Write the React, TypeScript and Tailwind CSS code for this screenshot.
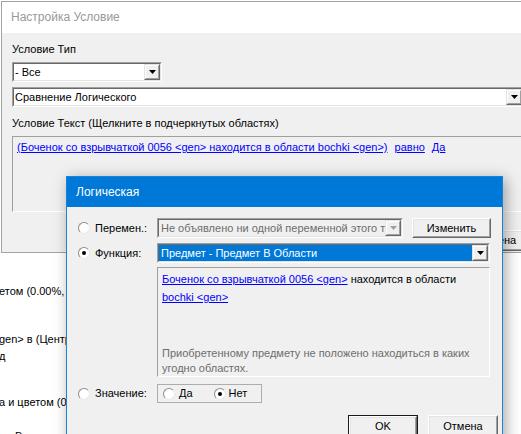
import React from "react";

const FONT = "font-['Liberation_Sans',Arial,sans-serif]";

function Arrow({ gray = false }: { gray?: boolean }) {
  return (
    <svg width="7" height="4" viewBox="0 0 7 4">
      <polygon points="0,0 7,0 3.5,4" fill={gray ? "#a0a0a0" : "#000"} />
    </svg>
  );
}

function DropBtn({ gray = false }: { gray?: boolean }) {
  return (
    <div className="w-[16px] h-full border border-t-[#e3e3e3] border-l-[#e3e3e3] border-r-[#696969] border-b-[#696969]">
      <div className="w-full h-full flex items-center justify-center bg-[#f0f0f0] border border-t-white border-l-white border-r-[#a0a0a0] border-b-[#a0a0a0]">
        <Arrow gray={gray} />
      </div>
    </div>
  );
}

function Combo({
  className,
  children,
  disabled = false,
}: {
  className: string;
  children: React.ReactNode;
  disabled?: boolean;
}) {
  return (
    <div
      className={
        "h-[20px] shrink-0 border border-t-[#a0a0a0] border-l-[#a0a0a0] border-r-white border-b-white " +
        className
      }
    >
      <div
        className={
          "flex h-full border border-t-[#696969] border-l-[#696969] border-r-[#e3e3e3] border-b-[#e3e3e3] " +
          (disabled ? "bg-[#f0f0f0]" : "bg-white")
        }
      >
        <div className="flex-1 min-w-0 overflow-hidden whitespace-nowrap flex items-center">
          {children}
        </div>
        <DropBtn gray={disabled} />
      </div>
    </div>
  );
}

function Btn({
  className,
  children,
  def = false,
}: {
  className: string;
  children: React.ReactNode;
  def?: boolean;
}) {
  return (
    <div
      className={
        "shrink-0 " +
        (def ? "border border-[#1a1a1a] " : "") +
        className
      }
    >
      <div className="w-full h-full border border-t-white border-l-white border-r-[#696969] border-b-[#696969]">
        <div className="w-full h-full flex items-center justify-center bg-[#f0f0f0] border border-t-[#e3e3e3] border-l-[#e3e3e3] border-r-[#a0a0a0] border-b-[#a0a0a0] text-[11px] text-black">
          {children}
        </div>
      </div>
    </div>
  );
}

function Radio({ checked = false }: { checked?: boolean }) {
  return (
    <div className="w-[12px] h-[12px] shrink-0 rounded-full border border-t-[#8c8c8c] border-l-[#8c8c8c] border-r-[#e8e8e8] border-b-[#e8e8e8] bg-white flex items-center justify-center">
      {checked && <div className="w-[4px] h-[4px] rounded-full bg-black" />}
    </div>
  );
}

export default function App() {
  return (
    <div
      className={
        "relative w-[521px] h-[434px] overflow-hidden bg-white text-[11px] leading-[13px] text-black " +
        FONT
      }
    >
      {/* background window text */}
      <div className="absolute left-[-1px] top-[285px] flex flex-col whitespace-nowrap">
        <div>етом (0.00%, 0.00%)</div>
        <div className="mt-[35px]">gen&gt; в (Центр области)</div>
        <div className="mt-[4px]">д</div>
        <div className="mt-[33px]">а и цветом (0.00%)</div>
        <div className="mt-[21px] pl-[16px]">В</div>
      </div>

      {/* Настройка Условие dialog */}
      <div className="absolute left-[1px] top-[1px] w-[560px] h-[252px] border border-[#a3a3a3] bg-[#f0f0f0] flex flex-col">
        <div className="h-[31px] shrink-0 bg-white flex items-center pl-[9px] text-[12px] text-[#999999]">
          Настройка Условие
        </div>
        <div className="flex flex-col pl-[10px]">
          <div className="mt-[10px]">Условие Тип</div>
          <Combo className="mt-[6px] w-[150px]">
            <span className="pl-[1px]">- Все</span>
          </Combo>
          <Combo className="mt-[5px] w-[512px]">
            <span className="pl-[1px]">Сравнение Логического</span>
          </Combo>
          <div className="mt-[10px]">
            Условие Текст (Щелкните в подчеркнутых областях)
          </div>
          <div className="mt-[6px] h-[76px] w-[560px] border border-t-[#a0a0a0] border-l-[#a0a0a0] border-r-white border-b-white pl-[4px] pt-[4px] whitespace-nowrap">
            <span className="text-[#0000ff] underline">
              (Боченок со взрывчаткой 0056 &lt;gen&gt; находится в области
              bochki &lt;gen&gt;)
            </span>
            <span className="ml-[7px] text-[#0000ff] underline">равно</span>
            <span className="ml-[7px] text-[#0000ff] underline">Да</span>
          </div>
          <div className="flex mt-[18px]">
            <Btn className="ml-[447px] w-[75px] h-[21px]">Отмена</Btn>
          </div>
        </div>
      </div>

      {/* Логическая dialog */}
      <div className="absolute left-[66px] top-[176px] w-[437px] h-[280px] border border-[#1883d7] bg-[#f0f0f0] shadow-[3px_3px_14px_rgba(0,0,0,0.35)] flex flex-col">
        <div className="h-[30px] shrink-0 bg-[#0078d7] flex items-center pl-[9px] text-[12px] text-white">
          Логическая
        </div>
        <div className="flex flex-col pl-[11px]">
          {/* row 1 */}
          <div className="mt-[11px] h-[20px] flex items-center">
            <div className="w-[79px] flex items-center gap-[5px] shrink-0">
              <Radio />
              <span>Перемен.:</span>
            </div>
            <Combo className="w-[246px]" disabled>
              <span className="pl-[2px] text-[#6d6d6d]">
                Не объявлено ни одной переменной этого типа
              </span>
            </Combo>
            <Btn className="ml-[9px] w-[79px] h-[20px]">Изменить</Btn>
          </div>
          {/* row 2 */}
          <div className="mt-[5px] h-[20px] flex items-center">
            <div className="w-[79px] flex items-center gap-[5px] shrink-0">
              <Radio checked />
              <span>Функция:</span>
            </div>
            <Combo className="w-[333px]">
              <div className="h-full w-full bg-[#0078d7] text-white flex items-center pl-[2px]">
                Предмет - Предмет В Области
              </div>
            </Combo>
          </div>
          {/* description box */}
          <div className="mt-[4px] ml-[79px] w-[333px] h-[110px] border border-t-[#a0a0a0] border-l-[#a0a0a0] border-r-white border-b-white flex flex-col justify-between pl-[4px] pt-[2px]">
            <div className="leading-[18px] whitespace-nowrap">
              <span className="text-[#0000ff] underline">
                Боченок со взрывчаткой 0056 &lt;gen&gt;
              </span>{" "}
              находится в области
              <br />
              <span className="text-[#0000ff] underline">bochki &lt;gen&gt;</span>
            </div>
            <div className="leading-[15px] text-[#6d6d6d]">
              Приобретенному предмету не положено находиться в каких
              <br />
              угодно областях.
            </div>
          </div>
          {/* row 3 */}
          <div className="mt-[7px] h-[19px] flex items-center">
            <div className="w-[79px] flex items-center gap-[5px] shrink-0">
              <Radio />
              <span>Значение:</span>
            </div>
            <div className="w-[105px] h-[19px] border border-[#adadad] flex items-center pl-[5px]">
              <Radio />
              <span className="ml-[4px]">Да</span>
              <div className="ml-[21px]">
                <Radio checked />
              </div>
              <span className="ml-[3px]">Нет</span>
            </div>
          </div>
          {/* buttons */}
          <div className="mt-[12px] flex">
            <Btn className="ml-[270px] w-[70px] h-[23px]" def>
              OK
            </Btn>
            <Btn className="ml-[10px] w-[70px] h-[23px]">Отмена</Btn>
          </div>
        </div>
      </div>
    </div>
  );
}
